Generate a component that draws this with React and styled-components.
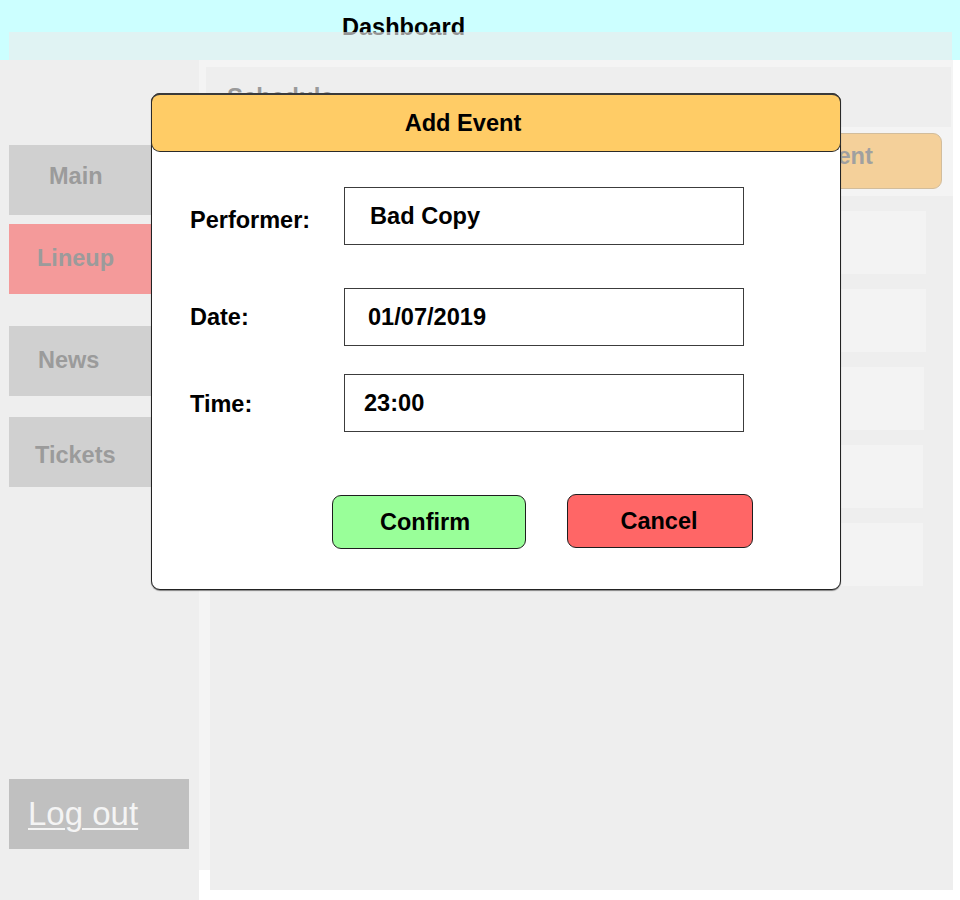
import React from "react";
import styled, { createGlobalStyle } from "styled-components";

const GlobalStyle = createGlobalStyle`
  html, body { margin: 0; padding: 0; background: #ffffff; }
  body { font-family: "Liberation Sans", Arial, Helvetica, sans-serif; }
  * { box-sizing: border-box; }
`;

const Page = styled.div`
  position: relative;
  width: 960px;
  height: 900px;
  overflow: hidden;
  background: #ffffff;
`;

const TopBar = styled.header`
  height: 60px;
  background: #ccffff;
  padding: 13px 153px 0 0;
  text-align: center;
  font-size: 23.6px;
  line-height: 28px;
  font-weight: bold;
  color: #000;
`;

const GhostStrip = styled.div`
  position: absolute;
  top: 32px;
  left: 9px;
  width: 943px;
  height: 28px;
  background: rgba(236, 236, 236, 0.63);
`;

const Body = styled.div`
  display: flex;
  align-items: flex-start;
  height: 840px;
`;

const Sidebar = styled.nav`
  width: 199px;
  height: 840px;
  background: #eeeeee;
  display: flex;
  flex-direction: column;
  padding: 85px 10px 51px 9px;
`;

const NavItem = styled.div`
  height: 70px;
  margin-top: ${(p) => p.$gap}px;
  background: ${(p) => (p.$active ? "#f49a9a" : "#d0d0d0")};
  color: #9b9b9b;
  font-size: 23.5px;
  font-weight: bold;
  display: flex;
  align-items: center;
  padding-left: ${(p) => p.$indent}px;
  padding-top: ${(p) => (p.$lift < 0 ? -p.$lift : 0)}px;
  padding-bottom: ${(p) => (p.$lift > 0 ? p.$lift : 0)}px;
`;

const LogoutItem = styled.div`
  margin-top: auto;
  height: 70px;
  background: #c0c0c0;
  display: flex;
  align-items: center;
  padding: 0 0 0 19px;
  font-size: 33px;
  color: #f4f4f4;
  text-decoration: underline;
  text-decoration-thickness: 2px;
  text-underline-offset: 3px;
`;

const Main = styled.main`
  width: 754px;
  height: 810px;
  background: #f4f4f4;
`;

const ScheduleBar = styled.div`
  height: 60px;
  margin: 7px 2px 0 7px;
  background: #eeeeee;
  padding: 18px 0 0 21px;
  font-size: 24px;
  line-height: 24px;
  font-weight: bold;
  color: #9a9a9a;
`;

const Toolbar = styled.div`
  height: 69px;
  display: flex;
  justify-content: flex-end;
  align-items: center;
  padding: 0 11px 1px 0;
`;

const GhostButton = styled.div`
  width: 257px;
  height: 56px;
  border-radius: 9px;
  background: #f4d09a;
  border: 1px solid #d2bd9c;
  display: flex;
  align-items: center;
  justify-content: center;
  padding: 0 0 10px 2px;
  font-size: 23.6px;
  font-weight: bold;
  color: #a0a0a0;
`;

const ContentPanel = styled.section`
  height: 694px;
  margin-left: 11px;
  background: #eeeeee;
  padding: 15px 27px 0 15px;
  display: flex;
  flex-direction: column;
  gap: 15px;
`;

const ListRow = styled.div`
  height: 63px;
  background: #f3f3f3;
  margin-right: ${(p) => p.$trim || 0}px;
`;

const Modal = styled.div`
  position: absolute;
  top: 93px;
  left: 151px;
  width: 690px;
  height: 497px;
  background: #ffffff;
  border: 1px solid #222;
  border-radius: 9px;
  box-shadow: 0 1px 1px rgba(0, 0, 0, 0.45);
`;

const ModalHeader = styled.div`
  margin: -1px -1px 0 -1px;
  height: 59px;
  background: #ffcc66;
  border: 1px solid #2a2a2a;
  border-top: 2px solid #3a3a3a;
  border-radius: 9px;
  display: flex;
  align-items: center;
  justify-content: center;
  padding-right: 66px;
  font-size: 23.6px;
  font-weight: bold;
  color: #000;
`;

const FormRow = styled.div`
  display: grid;
  grid-template-columns: 154px 400px;
  align-items: center;
  margin-top: ${(p) => p.$gap}px;
  padding-left: 38px;
`;

const Label = styled.div`
  font-size: 23.5px;
  font-weight: bold;
  color: #000;
  padding-top: ${(p) => p.$shift || 0}px;
`;

const Field = styled.div`
  height: 58px;
  border: 1px solid #3c3c3c;
  background: #fff;
  display: flex;
  align-items: center;
  padding-left: ${(p) => p.$inset}px;
  font-size: 23.6px;
  font-weight: bold;
  color: #000;
`;

const Actions = styled.div`
  display: flex;
  align-items: flex-start;
  gap: 41px;
  margin-top: 62px;
  padding-left: 180px;
`;

const ActionButton = styled.div`
  width: ${(p) => p.$w}px;
  height: 54px;
  margin-top: ${(p) => p.$drop || 0}px;
  border: 1px solid #1e1e1e;
  border-radius: 9px;
  background: ${(p) => p.$bg};
  display: flex;
  align-items: center;
  justify-content: center;
  padding-right: ${(p) => p.$nudge || 0}px;
  font-size: 23.5px;
  font-weight: bold;
  color: #000;
`;

export default function App() {
  return (
    <Page>
      <GlobalStyle />
      <TopBar>Dashboard</TopBar>
      <GhostStrip />
      <Body>
        <Sidebar>
          <NavItem $gap={0} $indent={40} $lift={8}>
            Main
          </NavItem>
          <NavItem $gap={9} $indent={28} $lift={2} $active>
            Lineup
          </NavItem>
          <NavItem $gap={32} $indent={29} $lift={2}>
            News
          </NavItem>
          <NavItem $gap={21} $indent={26} $lift={-6}>
            Tickets
          </NavItem>
          <LogoutItem>Log out</LogoutItem>
        </Sidebar>
        <Main>
          <ScheduleBar>Schedule</ScheduleBar>
          <Toolbar>
            <GhostButton>Add Event</GhostButton>
          </Toolbar>
          <ContentPanel>
            <ListRow />
            <ListRow />
            <ListRow $trim={2} />
            <ListRow $trim={3} />
            <ListRow $trim={3} />
          </ContentPanel>
        </Main>
      </Body>
      <Modal>
        <ModalHeader>Add Event</ModalHeader>
        <FormRow $gap={35}>
          <Label $shift={9}>Performer:</Label>
          <Field $inset={25}>Bad Copy</Field>
        </FormRow>
        <FormRow $gap={43}>
          <Label>Date:</Label>
          <Field $inset={23}>01/07/2019</Field>
        </FormRow>
        <FormRow $gap={28}>
          <Label $shift={2}>Time:</Label>
          <Field $inset={19}>23:00</Field>
        </FormRow>
        <Actions>
          <ActionButton $w={194} $drop={1} $nudge={8} $bg="#99ff99">
            Confirm
          </ActionButton>
          <ActionButton $w={186} $nudge={2} $bg="#ff6666">
            Cancel
          </ActionButton>
        </Actions>
      </Modal>
    </Page>
  );
}
